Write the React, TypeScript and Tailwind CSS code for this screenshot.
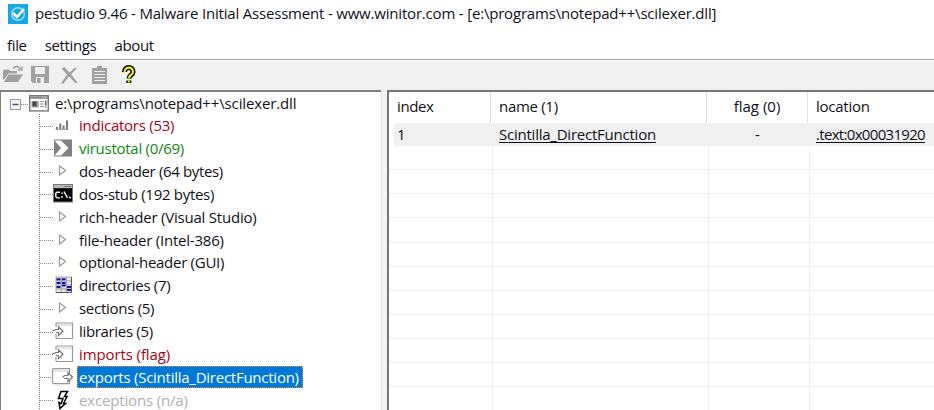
import React from "react";

type Kind = "window" | "bars" | "vt" | "tri" | "cmd" | "grid" | "in" | "out" | "bolt";

function TreeIcon({ kind }: { kind: Kind }) {
  const common = "block h-[20px] w-[24px] shrink-0 overflow-visible";
  switch (kind) {
    case "window":
      return (
        <svg className={common} viewBox="0 0 24 20">
          <rect x="1.7" y="1.7" width="18.6" height="15.2" fill="#fff" stroke="#777" strokeWidth="1.4" />
          <path d="M2 3.600h18" stroke="#888" strokeWidth="2.400" />
          <path d="M14.500 3.300h1M17 3.300h1" stroke="#eee" />
          <rect x="3.500" y="7" width="7.500" height="6.500" fill="#aaa" />
          <rect x="4.500" y="7.500" width="4" height="5" fill="#444" />
          <path d="M12 7.500h4M12 10h4M12 12.500h4" stroke="#999" />
          <path d="M17.800 6.500v5M17.800 12.500v1" stroke="#555" strokeWidth="1.400" />
        </svg>
      );
    case "bars":
      return (
        <svg className={common} viewBox="0 0 24 20">
          <path d="M4 14.500v-2.500M7.300 14.500V8.500M10.600 14.500v-4M14 14.500V5.500" stroke="#777" strokeWidth="2" />
          <path d="M2.500 14.300h13" stroke="#999" strokeWidth="1" />
        </svg>
      );
    case "vt":
      return (
        <svg className={common} viewBox="0 0 24 20">
          <rect x="1" y="1.500" width="18" height="17" fill="#808080" />
          <path d="M1.500 2.500H8l7.500 7.500-7.500 7.500H1.500L8 10z" fill="#fff" />
        </svg>
      );
    case "tri":
      return (
        <svg className={common} viewBox="0 0 24 20">
          <path d="M6.500 5l6 4.500-6 4.500z" fill="#fff" stroke="#999" strokeWidth="1.2" />
        </svg>
      );
    case "cmd":
      return (
        <svg className={common} viewBox="0 0 24 20">
          <rect x="0.500" y="0.500" width="19" height="17.500" fill="#000" stroke="#777" />
          <rect x="1" y="1" width="18" height="3.200" fill="#b8b8b8" />
          <path d="M11.500 2.500h1.200M14 2.500h1.200M16.500 2.500h1.200" stroke="#444" />
          <path d="M7 8.200H4L2.800 9.300v3.500L4 13.900h3M9 8.500V10M9 12v1.900M11 7.600l3.500 6.300M16 13.500h2" fill="none" stroke="#fff" strokeWidth="1.400" />
        </svg>
      );
    case "grid":
      return (
        <svg className={common} viewBox="0 0 24 20">
          <rect x="3" y="2" width="15.500" height="15.500" fill="#e8e8e8" stroke="#aaa" />
          <path d="M8.300 2v15.500M13.300 2v15.500M3 6h15M3 10h15M3 14h15" stroke="#999" />
          <path d="M3.500 4.200h4M9 4.200h3.500M3.500 8h4M9 8h3.500M3.500 12h4M9 10.500h3.500M14 12h4M14 15h4" stroke="#1010b8" strokeWidth="2" />
          <path d="M18.500 2v15.500H3" stroke="#555" fill="none" />
        </svg>
      );
    case "in":
      return (
        <svg className={common} viewBox="0 0 24 20">
          <path d="M3 6V3a1 1 0 011-1H19.500v15.500H4a1 1 0 01-1-1V13" fill="#fff" stroke="#999" strokeWidth="1.200" />
          <path d="M4 4h15" stroke="#ccc" />
          <path d="M-0.500 9.500h1.500l1.500-1h3V5.800l4.500 4.400L5.500 14.500v-3H3" fill="#fff" stroke="#777" strokeWidth="1.200" />
        </svg>
      );
    case "out":
      return (
        <svg className={common} viewBox="0 0 24 20">
          <path d="M16.500 6V1.700H1a1.500 1.500 0 00-1.500 1.500v12.500a1 1 0 001 1h16V13" fill="#fff" stroke="#999" strokeWidth="1.200" />
          <path d="M0 4h16" stroke="#ccc" />
          <path d="M9.500 10.500l2-2h3.500V5.500l4.500 4.500-4.500 4.500v-3h-4" fill="#fff" stroke="#777" strokeWidth="1.200" />
        </svg>
      );
    case "bolt":
      return (
        <svg className={common} viewBox="0 0 24 20">
          <path d="M8 1.500h6.500L11.500 6.500H14L10.500 13.500H12.500L7 18.500l-1-6 2 1.200 2-5.200H5.500z" fill="#fff" stroke="#000" strokeWidth="1.500" />
        </svg>
      );
  }
}

const rows: { kind: Kind; label: string; cls: string }[] = [
  { kind: "bars", label: "indicators (53)", cls: "tracking-[-0.25px] text-[#a80014]" },
  { kind: "vt", label: "virustotal (0/69)", cls: "tracking-[-0.27px] text-[#138613]" },
  { kind: "tri", label: "dos-header (64 bytes)", cls: "tracking-[-0.35px]" },
  { kind: "cmd", label: "dos-stub (192 bytes)", cls: "tracking-[-0.3px]" },
  { kind: "tri", label: "rich-header (Visual Studio)", cls: "tracking-[-0.22px]" },
  { kind: "tri", label: "file-header (Intel-386)", cls: "tracking-[-0.22px]" },
  { kind: "tri", label: "optional-header (GUI)", cls: "tracking-[-0.28px]" },
  { kind: "grid", label: "directories (7)", cls: "tracking-[-0.3px]" },
  { kind: "tri", label: "sections (5)", cls: "tracking-[-0.28px]" },
  { kind: "in", label: "libraries (5)", cls: "tracking-[-0.33px]" },
  { kind: "in", label: "imports (flag)", cls: "tracking-[-0.1px] text-[#a80014]" },
  { kind: "out", label: "exports (Scintilla_DirectFunction)", cls: "tracking-[-0.25px] text-white" },
  { kind: "bolt", label: "exceptions (n/a)", cls: "tracking-[-0.16px] text-[#b0b0b0]" },
];

function Toolbar() {
  return (
    <div className="flex h-[29px] shrink-0 items-center bg-[#f0f0f0] pl-[2px]">
      <svg className="mb-[2px] block h-[22px] w-[144px]" viewBox="0 0 144 22">
        <g fill="#a0a0a0">
          <path d="M1 7l1.500-1.500H7l1 1.500h7v2.500H6.500L2 15.500H1z" />
          <path d="M6.500 10.500H21l-5 7.500H2z" />
          <path d="M11 4.500c2.500-3 5.500-2.500 8 .5M20 2.500v3.500h-4" fill="none" stroke="#a0a0a0" strokeWidth="1.300" />
          <path d="M29 2h18v17H31l-2-2z" />
          <path d="M33 3h10v7H33zM34 13h8v6h-8z" fill="#f0f0f0" />
          <path d="M35 14h3.500v5H35z" />
          <path d="M59.500 4.500l3-1.500 5 5.500 5.500-5 2 .5-6 6.500 6.500 8-2 .8-6.500-6.800-5.500 7H59l6-9z" />
          <path d="M90 4h5V2h5v2h5v16H90z" />
        </g>
        <path d="M92 7.500h11M92 10.500h11M92 13.500h11M92 16.500h11" stroke="#f0f0f0" strokeWidth="1.200" />
        <path d="M122.500 8c0-6 8.500-6 8.500 0 0 3-4 2.500-4 6.500M126.800 16.500v2.500" fill="none" stroke="#000" strokeWidth="5" />
        <path d="M122.500 8.500c0-6.500 8.500-6.500 8.500-.5 0 3-4 2.500-4 6M126.800 16.500v2" fill="none" stroke="#f6ef20" strokeWidth="2.200" />
      </svg>
    </div>
  );
}

function Tree() {
  return (
    <div className="w-[381px] shrink-0 overflow-hidden border-l border-t-2 border-[#808080] bg-white">
      <div className="flex h-[22px] items-center pl-[9px]">
        <svg className="mt-[3px] block h-[11px] w-[11px] shrink-0" viewBox="0 0 11 11">
          <rect x="0.500" y="0.500" width="10" height="10" fill="#f4f4f4" stroke="#999" />
          <path d="M2.500 5.500h6" stroke="#405080" strokeWidth="1.400" />
        </svg>
        <div className="mt-[3px] w-[7px] border-t border-dotted border-[#888]" />
        <div className="mt-[2px]">
          <TreeIcon kind="window" />
        </div>
        <span className="pl-[3px] tracking-[-0.14px]">e:\programs\notepad++\scilexer.dll</span>
      </div>
      <div className="ml-[38px] border-l border-dotted border-[#888]">
        {rows.map((r) => (
          <div key={r.label} className="flex h-[22.85px] items-center">
            <div className="mt-[2px] w-[13px] shrink-0 border-t border-dotted border-[#888]" />
            <TreeIcon kind={r.kind} />
            <span
              className={
                r.kind === "out"
                  ? "flex h-[22px] items-center border border-dotted border-[#e09040] bg-[#0078d7] pl-px pr-[3px] " + r.cls
                  : "pl-[2px] " + r.cls
              }
            >
              {r.label}
            </span>
          </div>
        ))}
      </div>
    </div>
  );
}

function Table() {
  return (
    <div className="min-w-0 flex-1 overflow-hidden border-l-2 border-t-2 border-[#767676] bg-white">
      <div className="grid h-[31px] grid-cols-[102px_216px_101px_1fr] leading-[29px]">
        <div className="border-r border-[#e2e2e2] pl-[8px] tracking-[-0.4px]">index</div>
        <div className="border-r border-[#e2e2e2] pl-[8px] tracking-[-0.3px]">name (1)</div>
        <div className="border-r border-[#e2e2e2] text-center">flag (0)</div>
        <div className="pl-[8px] tracking-[-0.25px]">location</div>
      </div>
      <div className="ml-[5px] grid h-[23px] grid-cols-[97px_216px_101px_1fr] bg-[#f0f0f0] leading-[22px]">
        <div className="pl-[3px]">1</div>
        <div className="pl-[8px] tracking-[-0.23px]"><span className="underline underline-offset-2">Scintilla_DirectFunction</span></div>
        <div className="text-center">-</div>
        <div className="pl-[8px] tracking-[-0.68px]"><span className="underline underline-offset-2">.text:0x00031920</span></div>
      </div>
      {Array.from({ length: 11 }, (_, i) => (
        <div
          key={i}
          className={
            "grid h-[24.15px] grid-cols-[104px_216px_101px_1fr] " + (i < 10 ? "border-b border-[#efefef]" : "")
          }
        >
          <div className="border-r border-[#efefef]" />
          <div className="border-r border-[#efefef]" />
          <div className="border-r border-[#efefef]" />
          <div />
        </div>
      ))}
    </div>
  );
}

export default function App() {
  return (
    <div className="flex h-[410px] w-[934px] flex-col overflow-hidden whitespace-nowrap bg-white font-['Open_Sans','Noto_Sans',sans-serif] text-[15px] leading-[20px] text-[#101018]">
      <div className="flex h-[33px] shrink-0 items-start pl-[8px] pt-[4px]">
        <svg className="block h-[20px] w-[20px]" viewBox="0 0 20 20">
          <rect width="20" height="20" fill="#18a7e5" />
          <circle cx="10" cy="10" r="6.300" fill="none" stroke="#a5def5" strokeWidth="1.500" />
          <path d="M5 9l4 4 7-8" fill="none" stroke="#fff" strokeWidth="2.500" />
        </svg>
        <span className="-mt-px pl-[7px] tracking-[-0.19px]">pestudio 9.46 - Malware Initial Assessment - www.winitor.com - [e:\programs\notepad++\scilexer.dll]</span>
      </div>
      <div className="flex h-[26px] shrink-0 items-center gap-[18px] pb-[2px] pl-[7px] tracking-[-0.35px]">
        <span>file</span>
        <span>settings</span>
        <span>about</span>
      </div>
      <div className="h-[2px] shrink-0 border-t border-[#a0a0a0]" />
      <Toolbar />
      <div className="flex min-h-0 flex-1">
        <Tree />
        <div className="w-[6px] shrink-0 border-l border-[#e3e3e3] bg-[#f4f4f4]" />
        <Table />
      </div>
    </div>
  );
}
